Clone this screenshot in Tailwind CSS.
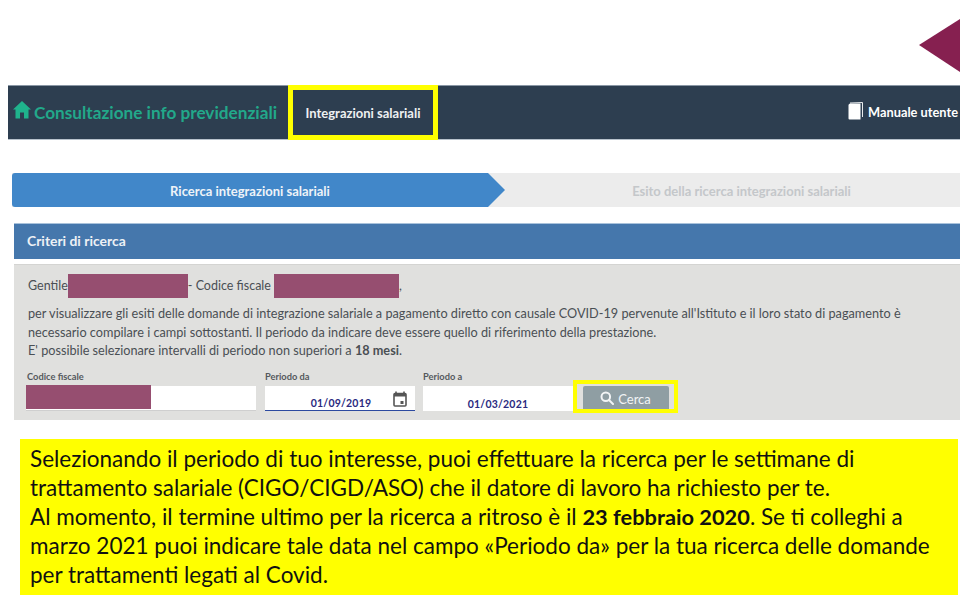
<!DOCTYPE html>
<html lang="en">
<head>
    <meta charset="UTF-8">
    <title>Consultazione info previdenziali</title>
    <script src="https://cdn.jsdelivr.net/npm/@tailwindcss/browser@4"></script>
</head>
<body class="bg-white w-[960px] h-[616px] overflow-hidden font-['Lato',sans-serif]">
    <!-- Slide arrow -->
    <div class="h-[85px] flex justify-end items-start pt-[19px]">
        <svg width="41" height="53" viewBox="0 0 41 53"><polygon points="0,26 41,0 41,53" fill="#862050"/></svg>
    </div>

    <!-- Navbar -->
    <div class="ml-2 h-[55px] bg-[#2d3e50] border-t border-b border-t-[#8a97a5] border-b-[#b8c2cc] flex items-center">
        <div class="flex items-center w-[280px] pl-[5px]">
            <svg width="18" height="18" viewBox="0 0 18 18" class="shrink-0 mb-[5px]"><path d="M9 0 L18 8.5 L15.5 8.5 L15.5 17.5 L11 17.5 L11 11.5 L7 11.5 L7 17.5 L2.5 17.5 L2.5 8.5 L0 8.5 Z" fill="#1fb38c"/></svg>
            <span class="ml-[3px] text-[17.2px] font-bold text-[#22a88a] whitespace-nowrap">Consultazione info previdenziali</span>
        </div>
        <div class="h-[55px] w-[150px] border-[5px] border-[#ffff00] flex items-center justify-center pt-[3px]">
            <span class="text-[13px] font-bold text-[#eef0f2] whitespace-nowrap">Integrazioni salariali</span>
        </div>
        <div class="ml-auto flex items-center pr-[2px]">
            <svg width="16" height="18" viewBox="0 0 16 18" class="shrink-0 mb-1"><path d="M0.5 3 Q0.5 2 2 1.5 L12.5 1.5 L12.5 17.5 L1.5 17.5 Q0.5 17.5 0.5 16.5 Z" fill="#fff"/><path d="M2 1 L14.5 0.5 L14.5 15" fill="none" stroke="#fff" stroke-width="0.9"/></svg>
            <span class="ml-1 text-[12.8px] font-bold text-white whitespace-nowrap">Manuale utente</span>
        </div>
    </div>

    <!-- Stepper -->
    <div class="mt-[33px] ml-3 h-[34px] bg-[#ececec] flex text-[13px] font-bold">
        <div class="w-[476px] pt-[3px] bg-[#4187c9] rounded-l-[3px] flex items-center justify-center text-[#eef3f8]">Ricerca integrazioni salariali</div>
        <svg width="17" height="34" viewBox="0 0 17 34" class="shrink-0"><polygon points="0,0 17,17 0,34" fill="#4187c9"/></svg>
        <div class="flex-1 pt-[3px] flex items-center justify-center pl-[18px] text-[#c4c7ca]">
            <span>Esito della ricerca integrazioni salariali</span>
        </div>
    </div>

    <!-- Criteri di ricerca -->
    <div class="mt-4 ml-[14px]">
        <div class="h-[36px] bg-[#4577ac] border-t border-[#a9c2db] flex items-center pl-[13px] text-[13.9px] font-bold text-[#edf1f5]">Criteri di ricerca</div>
        <div class="mt-[5px] h-[156px] bg-[#e0e0de] border-t border-[#d4d4d2] text-[#4a4f54] overflow-hidden">
            <div class="h-[24px] mt-[9px] pl-[14px] flex items-center text-[12.5px] pt-px">
                <span>Gentile</span>
                <span class="w-[120px] h-[24px] bg-[#964e70] shrink-0 -mt-px"></span>
                <span class="whitespace-pre">- Codice fiscale </span>
                <span class="w-[125px] h-[24px] bg-[#964e70] shrink-0 -mt-px"></span>
                <span>,</span>
            </div>
            <div class="mt-[6px] pl-[14px] text-[12.7px] leading-[18.5px] whitespace-nowrap">
                <p>per visualizzare gli esiti delle domande di integrazione salariale a pagamento diretto con causale COVID-19 pervenute all'Istituto e il loro stato di pagamento è</p>
                <p>necessario compilare i campi sottostanti. Il periodo da indicare deve essere quello di riferimento della prestazione.</p>
                <p>E' possibile selezionare intervalli di periodo non superiori a <b>18 mesi</b>.</p>
            </div>
            <!-- Form row -->
            <div class="mt-[12px] pl-3 flex items-end text-[9.3px] font-bold text-[#55595d]">
                <div class="w-[230px]">
                    <div class="pl-px leading-[10px] mb-1">Codice fiscale</div>
                    <div class="h-[25px] bg-white border-b border-[#cfcfcf]"><div class="w-[125px] h-[24px] bg-[#964e70] -translate-y-px"></div></div>
                </div>
                <div class="ml-[9px] w-[150px]">
                    <div class="leading-[10px] mb-1">Periodo da</div>
                    <div class="h-[25px] bg-white border-b-[1.5px] border-[#2c4aa0] flex items-end justify-center relative text-[10.5px] leading-[14px] text-[#2a2a80] tracking-[0.2px]">
                        <span class="pl-[2px]">01/09/2019</span>
                        <svg width="14" height="17" viewBox="0 0 14 17" class="absolute right-[8px] top-[5px]"><path d="M3 0.5v3M11 0.5v3" stroke="#555" stroke-width="1.6"/><rect x="1" y="2.5" width="12" height="12.5" rx="1" fill="none" stroke="#555" stroke-width="1.6"/><rect x="1" y="2.5" width="12" height="3" fill="#555"/><rect x="7.5" y="10" width="3" height="3" fill="#555"/></svg>
                    </div>
                </div>
                <div class="ml-2 w-[150px]">
                    <div class="leading-[10px] mb-1">Periodo a</div>
                    <div class="h-[25px] bg-white flex items-end justify-center text-[10.5px] leading-[14px] text-[#2a2a80] tracking-[0.2px]"><span>01/03/2021</span></div>
                </div>
                <div class="mb-[-2px] w-[105px] h-[33px] border-[4px] border-[#ffff00] flex items-end justify-center">
                    <div class="w-[86px] h-[23px] pt-[5px] bg-[#8f9ea3] rounded-t-[2px] flex items-center justify-center text-[13px] font-normal text-[#f2f4f5]">
                        <svg width="14" height="14" viewBox="0 0 14 14" fill="none" stroke="#f2f4f5" stroke-width="2" class="mb-[3px]"><circle cx="5.8" cy="5.8" r="4.3"/><path d="M9 9l4 4" stroke-linecap="round"/></svg>
                        <span class="ml-1">Cerca</span>
                    </div>
                </div>
            </div>
        </div>
    </div>

    <!-- Note -->
    <div class="mt-[19px] ml-5 w-[938px] h-[156px] bg-[#ffff00] pl-[10px] pt-[5px] text-[22.5px] leading-[29px] text-[#111] whitespace-nowrap">
        <p>Selezionando il periodo di tuo interesse, puoi effettuare la ricerca per le settimane di</p>
        <p>trattamento salariale (CIGO/CIGD/ASO) che il datore di lavoro ha richiesto per te.</p>
        <p>Al momento, il termine ultimo per la ricerca a ritroso è il <b class="text-[21.8px]">23 febbraio 2020</b>. Se ti colleghi a</p>
        <p>marzo 2021 puoi indicare tale data nel campo «Periodo da» per la tua ricerca delle domande</p>
        <p>per trattamenti legati al Covid.</p>
    </div>
</body>
</html>
